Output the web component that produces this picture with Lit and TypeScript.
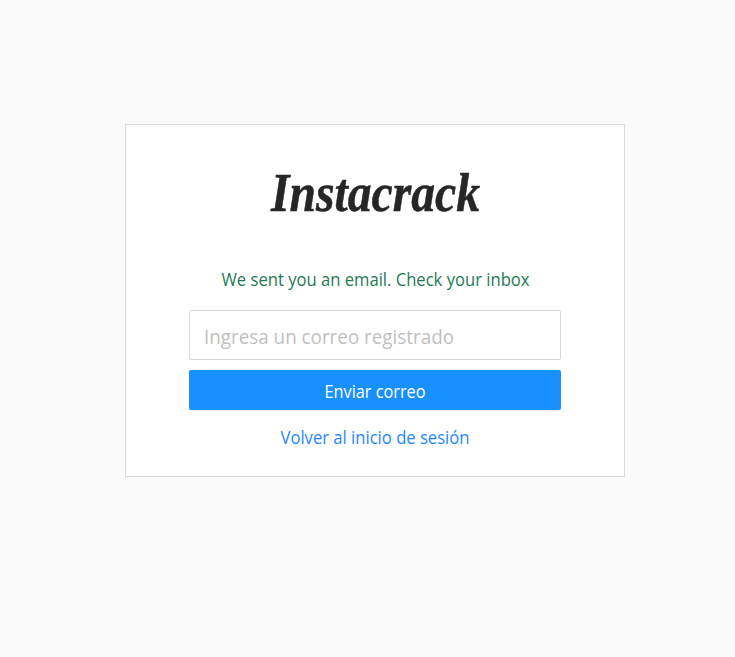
import { LitElement, html, css, svg } from "lit";
import { customElement } from "lit/decorators.js";

@customElement("app-root")
class AppRoot extends LitElement {
  static styles = css`
    * { box-sizing: border-box; }
    :host { box-sizing: border-box; display: flex; justify-content: center; align-items: flex-start; height: 100vh; padding: 124px 0 0 15px; background: #fafafa; font-family: "Open Sans", "Noto Sans", sans-serif; }
    .card { width: 500px; height: 353px; border: 1px solid #dbdbdb; background: #fff; padding: 0 63px; display: flex; flex-direction: column; }
    .logo { display: block; width: 240px; height: 85px; margin: 25px auto 32px; overflow: visible; }
    .logo text { font-family: "Liberation Serif", serif; font-style: italic; font-weight: bold; font-size: 55px; fill: #262626; stroke: #262626; stroke-width: 0.5px; }
    .line { display: block; height: 26px; line-height: 26px; text-align: center; }
    .line svg { display: block; width: 100%; height: 26px; overflow: visible; }
    .message { fill: #1f7a55; font-size: 17.6px; }
    .field { margin-top: 17px; height: 50px; border: 1px solid #d9d9d9; border-radius: 2px; }
    .field svg, .button svg { display: block; width: 100%; height: 100%; }
    .placeholder { fill: #bfbfbf; font-size: 19.6px; }
    .button { margin-top: 10px; height: 40px; padding: 0; border: 0; border-radius: 2px; background: #1890ff; box-shadow: 0 2px 0 rgba(0,0,0,.045); font-family: inherit; }
    .label { fill: #fff; font-size: 17.6px; }
    .back { margin-top: 15px; text-decoration: none; }
    .link { fill: #1f88ff; font-size: 17.6px; }
  `;

  private text(cls: string, x: number, y: number, width: number, value: string) {
    return html`<svg>${svg`<text class=${cls} x=${x} y=${y} textLength=${width} lengthAdjust="spacingAndGlyphs">${value}</text>`}</svg>`;
  }

  render() {
    return html`<main class="card">
      <svg class="logo"><text x="16" y="61" textLength="209" lengthAdjust="spacingAndGlyphs">Instacrack</text></svg>
      <div class="line">${this.text("message", 32.5, 19, 308, "We sent you an email. Check your inbox")}</div>
      <div class="field">${this.text("placeholder", 14, 33, 250, "Ingresa un correo registrado")}</div>
      <button class="button">${this.text("label", 135.5, 28, 101, "Enviar correo")}</button>
      <a class="line back" href="#">${this.text("link", 91.5, 19, 189, "Volver al inicio de sesión")}</a>
    </main>`;
  }
}
